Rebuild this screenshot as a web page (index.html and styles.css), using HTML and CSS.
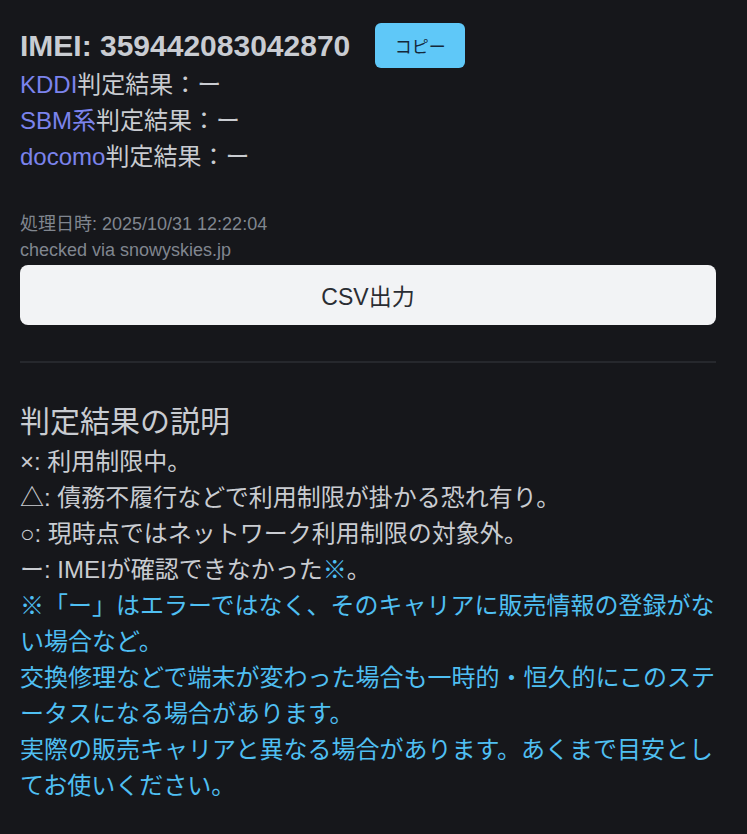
FILE: index.html
```html
<!DOCTYPE html>
<html lang="ja">
<head>
    <meta charset="UTF-8">
    <meta name="viewport" content="width=device-width, initial-scale=1.0">
    <title>IMEI 判定結果</title>
    <link rel="stylesheet" href="styles.css">
</head>
<body>
    <div class="container">
        <div class="imei-row">
            <h1 class="imei">IMEI: 359442083042870</h1>
            <button class="copy-btn">コピー</button>
        </div>

        <div class="results">
            <div><span class="carrier">KDDI</span>判定結果：ー</div>
            <div><span class="carrier">SBM系</span>判定結果：ー</div>
            <div><span class="carrier">docomo</span>判定結果：ー</div>
        </div>

        <div class="meta">
            <div>処理日時: 2025/10/31 12:22:04</div>
            <div>checked via snowyskies.jp</div>
        </div>

        <button class="csv-btn">CSV出力</button>

        <hr class="divider">

        <h2 class="legend-title">判定結果の説明</h2>
        <div class="legend">
            <div>×: 利用制限中。</div>
            <div>△: 債務不履行などで利用制限が掛かる恐れ有り。</div>
            <div>○: 現時点ではネットワーク利用制限の対象外。</div>
            <div>ー: IMEIが確認できなかった<span class="note-mark">※</span>。</div>
            <div class="note">※「ー」はエラーではなく、そのキャリアに販売情報の登録がない場合など。</div>
            <div class="note">交換修理などで端末が変わった場合も一時的・恒久的にこのステータスになる場合があります。</div>
            <div class="note">実際の販売キャリアと異なる場合があります。あくまで目安としてお使いください。</div>
        </div>
    </div>
</body>
</html>
```

FILE: styles.css
```css
body {
    margin: 0;
    background-color: #16171b;
    color: #c9ccd1;
    font-family: "Liberation Sans", "Noto Sans CJK JP", sans-serif;
}
.container {
    padding: 23px 31px 30px 20px;
    box-sizing: border-box;
    width: 100%;
}
.imei-row {
    display: flex;
    align-items: center;
    gap: 25px;
    height: 45px;
}
.imei {
    margin: 0;
    font-size: 30px;
    font-weight: bold;
    color: #c9ccd2;
}
.copy-btn {
    width: 90px;
    height: 45px;
    border: none;
    border-radius: 6px;
    background-color: #5fc8f8;
    color: #15283a;
    font-family: "Noto Sans CJK JP", sans-serif;
    font-size: 17px;
    cursor: pointer;
}
.results {
    font-size: 24px;
    line-height: 36px;
    margin-top: -1px;
}
.carrier {
    color: #7b83ec;
}
.meta {
    margin-top: 36px;
    font-size: 18px;
    line-height: 26px;
    color: #80868f;
}
.csv-btn {
    display: block;
    width: 100%;
    height: 60px;
    margin-top: 2px;
    border: none;
    border-radius: 8px;
    background-color: #f2f3f5;
    color: #2a2d33;
    font-family: "Liberation Sans", "Noto Sans CJK JP", sans-serif;
    font-size: 23px;
    cursor: pointer;
}
.divider {
    margin: 36px 0 0 0;
    border: none;
    height: 2px;
    background-color: #26282d;
}
.legend-title {
    margin: 37px 0 0 0;
    font-size: 30px;
    font-weight: normal;
    line-height: 44px;
    color: #c9ccd1;
}
.legend {
    font-size: 24px;
    line-height: 36px;
    margin-right: -4px;
}
.note,
.note-mark {
    color: #4fbff2;
}
```
